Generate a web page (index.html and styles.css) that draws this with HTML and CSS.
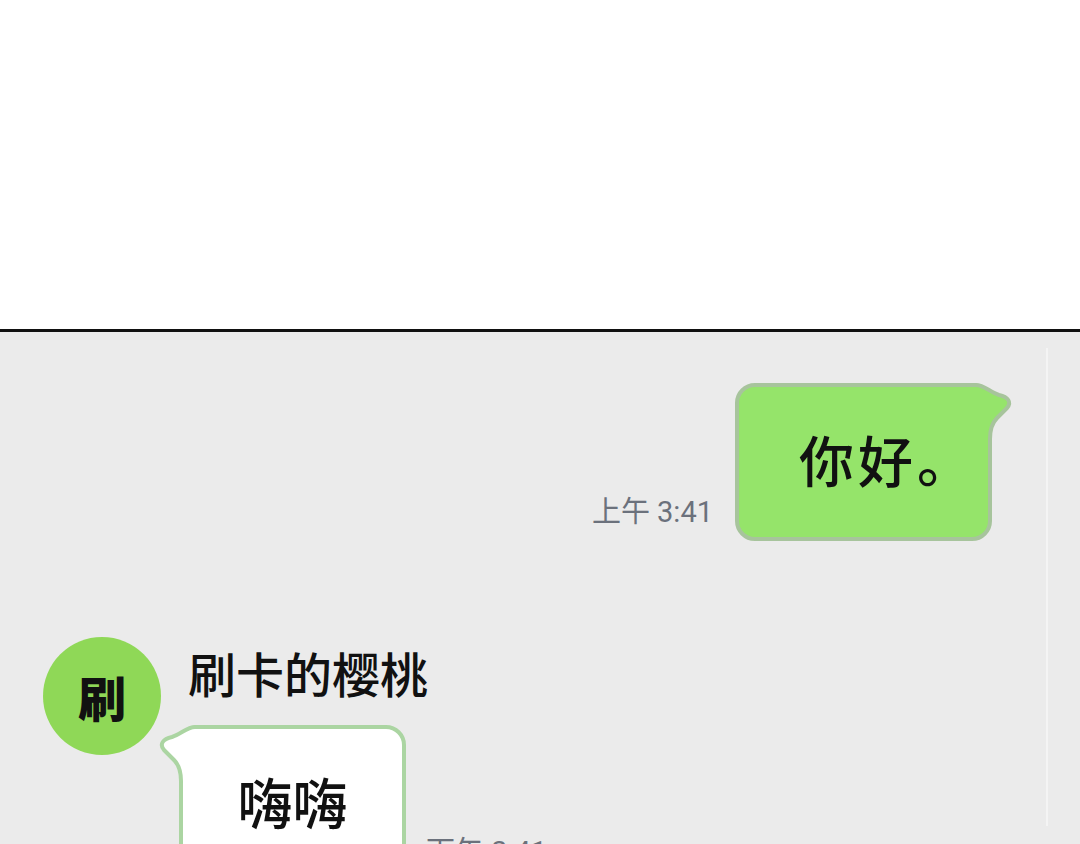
FILE: index.html
```html
<!DOCTYPE html>
<html lang="zh-CN">
<head>
<meta charset="utf-8">
<title>聊天</title>
<link rel="stylesheet" href="styles.css">
</head>
<body>
<div class="blank"></div>
<main class="chat">
  <section class="thread">
    <div class="msg msg-out">
      <span class="time">上午 3:41</span>
      <div class="bubble bubble-out">
        <span class="bubble-text text-out">你好。</span>
        <svg class="tail tail-out" width="48" height="56" viewBox="0 0 48 56">
          <path class="tail-fill" d="M0 2 H8 C16 2 22 9 31 12 C40 14 44 19 39 25 L29 35 C24 40 22 46 22 56 H0 Z"/>
          <path class="tail-line" d="M0 2 H8 C16 2 22 9 31 12 C40 14 44 19 39 25 L29 35 C24 40 22 46 22 56"/>
        </svg>
      </div>
    </div>

    <div class="msg msg-in">
      <div class="avatar">刷</div>
      <div class="msg-body">
        <div class="name">刷卡的樱桃</div>
        <div class="msg-row">
          <div class="bubble bubble-in">
            <span class="bubble-text">嗨嗨</span>
            <svg class="tail tail-in" width="48" height="56" viewBox="0 0 48 56">
              <path class="tail-fill" d="M0 2 H8 C16 2 22 9 31 12 C40 14 44 19 39 25 L29 35 C24 40 22 46 22 56 H0 Z"/>
              <path class="tail-line" d="M0 2 H8 C16 2 22 9 31 12 C40 14 44 19 39 25 L29 35 C24 40 22 46 22 56"/>
            </svg>
          </div>
          <span class="time">下午 3:41</span>
        </div>
      </div>
    </div>
  </section>
  <div class="track"></div>
</main>
</body>
</html>
```

FILE: styles.css
```css
* {
  box-sizing: border-box;
}

html, body {
  margin: 0;
  padding: 0;
  height: 100%;
  overflow: hidden;
  background: #ffffff;
}

body {
  font-family: "Noto Sans CJK SC", "Noto Sans", sans-serif;
  color: #111111;
}

.blank {
  height: 332px;
  background: #ffffff;
  border-bottom: 3px solid #111111;
}

.chat {
  display: flex;
  background: #ebebeb;
  min-height: 600px;
}

.thread {
  width: 1046px;
  flex: none;
  padding-top: 51px;
}

.track {
  width: 2px;
  height: 478px;
  margin-top: 16px;
  background: #f4f4f4;
}

.msg {
  display: flex;
}

.msg-out {
  justify-content: flex-end;
  align-items: flex-end;
  gap: 22px;
  padding-right: 54px;
}

.time {
  font-family: "Roboto", "Noto Sans CJK SC", sans-serif;
  font-size: 29px;
  line-height: 34px;
  color: #6b717c;
  white-space: nowrap;
}

.msg-out .time {
  margin-bottom: 12px;
}

.bubble {
  position: relative;
  border: 4px solid;
  border-radius: 20px;
  display: flex;
  align-items: center;
}

.bubble-text {
  font-size: 55px;
  font-weight: 500;
  line-height: 1;
  white-space: nowrap;
}

.text-out {
  letter-spacing: 4px;
}

.bubble-out {
  width: 257px;
  height: 158px;
  background: #95e46a;
  border-color: #a7c49c;
  padding-left: 60px;
  padding-bottom: 7px;
}

.bubble-in {
  width: 227px;
  height: 156px;
  background: #ffffff;
  border-color: #abd5a2;
  justify-content: center;
  padding-bottom: 6px;
}

.tail {
  position: absolute;
  top: -4px;
  overflow: visible;
}

.tail-out {
  left: calc(100% - 20px);
}

.tail-in {
  left: -28px;
  transform: scaleX(-1);
}

.tail-line {
  fill: none;
  stroke-width: 4;
  stroke-linejoin: round;
  stroke-linecap: round;
}

.tail-out .tail-fill { fill: #95e46a; }
.tail-out .tail-line { stroke: #a7c49c; }
.tail-in .tail-fill { fill: #ffffff; }
.tail-in .tail-line { stroke: #abd5a2; }

.msg-in {
  margin-top: 96px;
  padding-left: 43px;
  gap: 18px;
  align-items: flex-start;
}

.avatar {
  width: 118px;
  height: 118px;
  flex: none;
  border-radius: 50%;
  background: #8fd857;
  display: flex;
  align-items: center;
  justify-content: center;
  font-size: 48px;
  font-weight: 900;
  color: #111111;
}

.msg-body {
  display: flex;
  flex-direction: column;
  padding-top: 7px;
}

.name {
  font-size: 48px;
  font-weight: 500;
  line-height: 56px;
  padding-left: 9px;
  margin-bottom: 25px;
}

.msg-row {
  display: flex;
  align-items: flex-end;
  gap: 20px;
}

.msg-row .time {
  margin-bottom: 12px;
}
```
